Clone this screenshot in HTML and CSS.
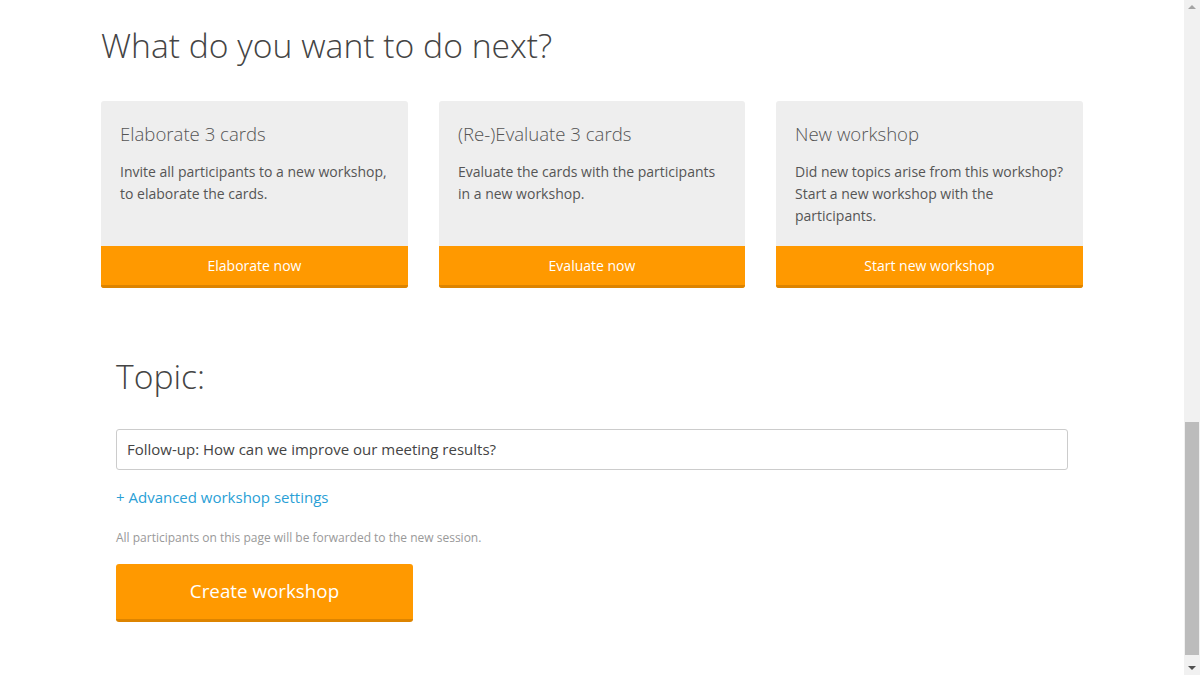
FILE: index.html
```html
<!DOCTYPE html>
<html>
<head>
<meta charset="utf-8">
<link rel="stylesheet" href="styles.css">
</head>
<body>
<main class="page">
  <h1 class="title">What do you want to do next?</h1>
  <div class="cards">
    <div class="card">
      <div class="card-body">
        <h2 class="card-title">Elaborate 3 cards</h2>
        <p class="card-text">Invite all participants to a new workshop, to elaborate the cards.</p>
      </div>
      <a class="card-btn">Elaborate now</a>
    </div>
    <div class="card">
      <div class="card-body">
        <h2 class="card-title">(Re-)Evaluate 3 cards</h2>
        <p class="card-text">Evaluate the cards with the participants in a new workshop.</p>
      </div>
      <a class="card-btn">Evaluate now</a>
    </div>
    <div class="card">
      <div class="card-body">
        <h2 class="card-title">New workshop</h2>
        <p class="card-text">Did new topics arise from this workshop? Start a new workshop with the participants.</p>
      </div>
      <a class="card-btn">Start new workshop</a>
    </div>
  </div>

  <section class="topic">
    <h2 class="topic-title">Topic:</h2>
    <div class="topic-input">Follow-up: How can we improve our meeting results?</div>
    <a class="adv-link">+ Advanced workshop settings</a>
    <p class="note">All participants on this page will be forwarded to the new session.</p>
    <a class="create-btn">Create workshop</a>
  </section>
</main>
<div class="scrollbar">
  <div class="arrow-up"></div>
  <div class="thumb"></div>
  <div class="arrow-down"></div>
</div>
</body>
</html>
```
FILE: styles.css
```css
html, body {
  margin: 0;
  padding: 0;
  background: #ffffff;
  height: 675px;
  overflow: hidden;
}
body {
  font-family: "Open Sans", "Liberation Sans", sans-serif;
  color: #555555;
}
.page {
  padding: 0 0 0 101px;
  width: 983px;
}
.title {
  margin: 0;
  padding-top: 21px;
  font-size: 33.7px;
  font-weight: 300;
  line-height: 48px;
  color: #444444;
}
.cards {
  display: grid;
  grid-template-columns: 307px 306px 307px;
  column-gap: 31px;
  margin-top: 32px;
}
.card {
  display: flex;
  flex-direction: column;
  border-radius: 3px;
  overflow: hidden;
}
.card-body {
  background: #eeeeee;
  height: 145px;
  box-sizing: border-box;
  padding: 19px 19px 0 19px;
}
.card-title {
  margin: 0;
  font-size: 18.6px;
  font-weight: 300;
  line-height: 28px;
  color: #555555;
}
.card-text {
  margin: 13px 0 0 0;
  font-size: 14px;
  line-height: 22px;
  color: #555555;
}
.card-btn {
  display: block;
  height: 39px;
  line-height: 39px;
  text-align: center;
  background: #ff9900;
  border-bottom: 3px solid #dd8400;
  color: #ffffff;
  font-size: 14px;
}
.topic {
  padding: 0 0 0 15px;
  width: 952px;
  margin-top: 68px;
}
.topic-title {
  margin: 0;
  font-size: 33.7px;
  font-weight: 300;
  line-height: 40px;
  color: #444444;
}
.topic-input {
  margin-top: 33px;
  height: 41px;
  box-sizing: border-box;
  border: 1px solid #cccccc;
  border-radius: 3px;
  padding: 0 10px;
  line-height: 39px;
  font-size: 15px;
  color: #444444;
}
.adv-link {
  display: block;
  margin-top: 16px;
  font-size: 15px;
  line-height: 22px;
  color: #2a9fd6;
}
.note {
  margin: 21px 0 0 0;
  font-size: 12px;
  line-height: 18px;
  color: #999999;
}
.create-btn {
  display: block;
  margin-top: 17px;
  width: 297px;
  height: 55px;
  line-height: 55px;
  text-align: center;
  background: #ff9900;
  border-bottom: 3px solid #dd8400;
  border-radius: 3px;
  color: #ffffff;
  font-size: 18.8px;
}
.scrollbar {
  position: fixed;
  top: 0;
  right: 0;
  width: 16px;
  height: 675px;
  background: #f1f1f1;
}
.arrow-up {
  position: absolute;
  top: 5px;
  left: 4px;
  width: 0;
  height: 0;
  border-left: 4px solid transparent;
  border-right: 4px solid transparent;
  border-bottom: 4px solid #a3a3a3;
}
.arrow-down {
  position: absolute;
  bottom: 5px;
  left: 4px;
  width: 0;
  height: 0;
  border-left: 4px solid transparent;
  border-right: 4px solid transparent;
  border-top: 4px solid #505050;
}
.thumb {
  position: absolute;
  top: 422px;
  left: 1px;
  width: 14px;
  height: 233px;
  background: #bcbcbc;
}
```
